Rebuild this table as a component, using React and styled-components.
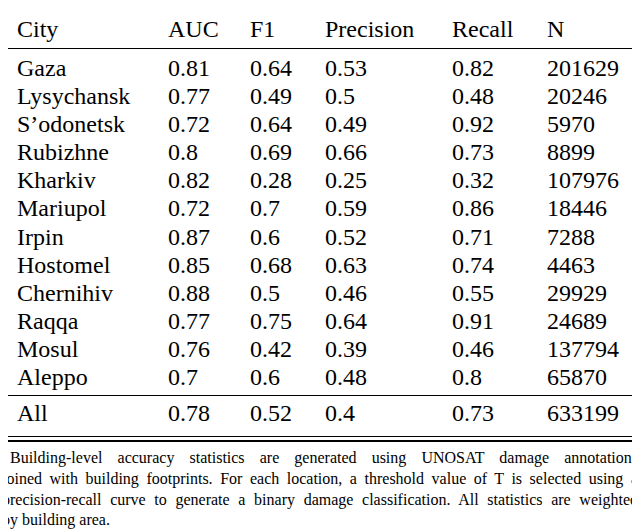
import React from "react";
import styled from "styled-components";

const rows = [
  ["Gaza", "0.81", "0.64", "0.53", "0.82", "201629"],
  ["Lysychansk", "0.77", "0.49", "0.5", "0.48", "20246"],
  ["S\u2019odonetsk", "0.72", "0.64", "0.49", "0.92", "5970"],
  ["Rubizhne", "0.8", "0.69", "0.66", "0.73", "8899"],
  ["Kharkiv", "0.82", "0.28", "0.25", "0.32", "107976"],
  ["Mariupol", "0.72", "0.7", "0.59", "0.86", "18446"],
  ["Irpin", "0.87", "0.6", "0.52", "0.71", "7288"],
  ["Hostomel", "0.85", "0.68", "0.63", "0.74", "4463"],
  ["Chernihiv", "0.88", "0.5", "0.46", "0.55", "29929"],
  ["Raqqa", "0.77", "0.75", "0.64", "0.91", "24689"],
  ["Mosul", "0.76", "0.42", "0.39", "0.46", "137794"],
  ["Aleppo", "0.7", "0.6", "0.48", "0.8", "65870"],
];

const header = ["City", "AUC", "F1", "Precision", "Recall", "N"];
const total = ["All", "0.78", "0.52", "0.4", "0.73", "633199"];

const captionLines = [
  "Building-level accuracy statistics are generated using UNOSAT damage annotations",
  "joined with building footprints. For each location, a threshold value of T is selected using a",
  "precision-recall curve to generate a binary damage classification. All statistics are weighted",
  "by building area.",
];

const Figure = styled.div`
  width: 638px;
  margin: -8px 0 0 -8px;
  font-family: "Liberation Serif", serif;
`;

const DoubleRule = styled.div`
  height: ${(p) => (p.$top ? 4 : 3)}px;
  border-top: ${(p) => (p.$top ? 2 : 1)}px solid #000;
  border-bottom: ${(p) => (p.$top ? 1 : 2)}px solid #000;
`;

const Section = styled.div`
  padding: ${(p) => p.$pad};
  border-bottom: ${(p) => (p.$rule ? "1px solid #000" : "none")};
`;

const Row = styled.div`
  display: grid;
  grid-template-columns: 168px 82px 75px 127px 95px 1fr;
  line-height: ${(p) => p.$lh || 28}px;
`;

const Cell = styled.div`
  font-family: "Liberation Serif", serif;
  font-size: 24px;
  padding-left: ${(p) => (p.$first ? 17 : 0)}px;
  white-space: nowrap;
`;

const Caption = styled.div`
  margin: 6px 0 0 2px;
  width: 636px;
`;

const CaptionLine = styled.div`
  font-family: "Liberation Serif", serif;
  font-size: 16px;
  line-height: 20.7px;
  white-space: nowrap;
  padding-left: ${(p) => (p.$indent ? 8 : 0)}px;
  text-align: ${(p) => (p.$last ? "left" : "justify")};
  text-align-last: ${(p) => (p.$last ? "left" : "justify")};
`;

const TableRow = ({ cells, lh }) => (
  <Row $lh={lh}>
    {cells.map((c, i) => (
      <Cell key={i} $first={i === 0}>
        {c}
      </Cell>
    ))}
  </Row>
);

export default function App() {
  return (
    <Figure>
      <DoubleRule $top />
      <Section $pad="8px 0 5px" $rule>
        <TableRow cells={header} />
      </Section>
      <Section $pad="5px 0 4px" $rule>
        {rows.map((r) => (
          <TableRow key={r[0]} cells={r} lh={28.1} />
        ))}
      </Section>
      <Section $pad="3px 0 9px">
        <TableRow cells={total} />
      </Section>
      <DoubleRule />
      <Caption>
        {captionLines.map((l, i) => (
          <CaptionLine
            key={i}
            $indent={i === 0}
            $last={i === captionLines.length - 1}
          >
            {l}
          </CaptionLine>
        ))}
      </Caption>
    </Figure>
  );
}
